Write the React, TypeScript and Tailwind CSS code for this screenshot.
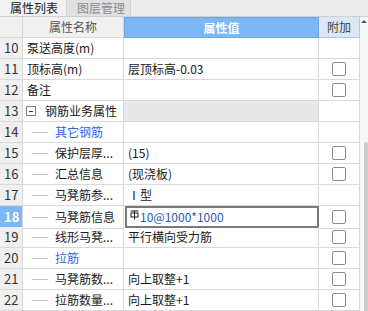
import React from "react"

type Row = {
  n: number
  name: string
  value?: string
  check?: boolean
  group?: boolean
  child?: boolean
  blue?: boolean
  selected?: boolean
}

const rows: Row[] = [
  { n: 10, name: "泵送高度(m)", value: "" },
  { n: 11, name: "顶标高(m)", value: "层顶标高-0.03", check: true },
  { n: 12, name: "备注", value: "", check: true },
  { n: 13, name: "钢筋业务属性", group: true },
  { n: 14, name: "其它钢筋", child: true, blue: true },
  { n: 15, name: "保护层厚...", value: "(15)", child: true, check: true },
  { n: 16, name: "汇总信息", value: "(现浇板)", child: true, check: true },
  { n: 17, name: "马凳筋参...", value: "Ⅰ型", child: true },
  { n: 18, name: "马凳筋信息", value: "10@1000*1000", child: true, check: true, selected: true },
  { n: 19, name: "线形马凳...", value: "平行横向受力筋", child: true, check: true },
  { n: 20, name: "拉筋", child: true, blue: true, check: true },
  { n: 21, name: "马凳筋数...", value: "向上取整+1", child: true, check: true },
  { n: 22, name: "拉筋数量...", value: "向上取整+1", child: true, check: true },
]

function Checkbox() {
  return <div className="w-[14px] h-[14px] rounded-[2px] border border-[#8c8c8c] bg-white" />
}

// HRB400 rebar grade symbol
function RebarMark() {
  return (
    <svg width="9" height="10" viewBox="0 0 9 10" className="mr-[1px] -mt-[4px]">
      <line x1="4.5" y1="0.5" x2="4.5" y2="9.5" stroke="#222" strokeWidth="1" />
      <rect x="1" y="3" width="7" height="4" fill="none" stroke="#222" strokeWidth="1" />
      <line x1="0.5" y1="1" x2="8.5" y2="1" stroke="#222" strokeWidth="1" />
    </svg>
  )
}

export default function App() {
  return (
    <div
      className="w-[368px] h-[311px] overflow-hidden bg-white flex flex-col text-[12px] text-[#1a1a1a]"
      style={{ fontFamily: '"Noto Sans CJK SC", "Noto Sans", sans-serif' }}
    >
      {/* tabs */}
      <div className="h-[17px] shrink-0 flex bg-[#ececec] border-b border-[#cfcfcf]">
        <div className="w-[66px] flex items-center pl-[10px] bg-[#f2f2f2] text-[#222] leading-none">属性列表</div>
        <div className="w-[65px] flex items-center pl-[10px] bg-[#e1e1e1] text-[#8c8c8c] border-x border-[#d2d2d2] leading-none">
          图层管理
        </div>
      </div>

      <div className="flex flex-1 min-h-0">
        <div className="w-[360px] flex flex-col">
          {/* header */}
          <div className="grid grid-cols-[23px_101px_195px_41px] h-[21px] shrink-0">
            <div className="bg-[#f0f0f0] border-r border-b border-[#d9d9d9]" />
            <div className="bg-[#f0f0f0] border-r border-b border-[#d9d9d9] flex items-center justify-center text-[#555]">
              属性名称
            </div>
            <div className="bg-[#7db8f6] border border-[#6aa6e8] flex items-center justify-center text-white font-bold">
              属性值
            </div>
            <div className="bg-[#dbe7f3] border-b border-r border-[#a9c9ea] flex items-center justify-center text-[#444]">
              附加
            </div>
          </div>

          {rows.map((r) => (
            <div key={r.n} className="grid grid-cols-[23px_101px_195px_41px] h-[21px] shrink-0">
              <div
                className={
                  r.selected
                    ? "bg-[#7db8f6] text-white font-bold border-r border-b border-[#d9d9d9] flex items-center pl-[4px] text-[13px]"
                    : "bg-[#f0f0f0] text-[#333] border-r border-b border-[#d9d9d9] flex items-center pl-[4px] text-[13px]"
                }
              >
                {r.n}
              </div>
              <div className="border-r border-b border-[#d9d9d9] flex items-center whitespace-nowrap overflow-hidden">
                {r.group ? (
                  <>
                    <div className="ml-[3px] w-[10px] h-[10px] border border-[#808080] flex items-center justify-center">
                      <div className="w-[4px] h-px bg-[#333]" />
                    </div>
                    <span className="ml-[9px]">{r.name}</span>
                  </>
                ) : r.child ? (
                  <>
                    <div className="ml-[9px] w-[16px] h-px bg-[#c4c4c4]" />
                    <span className={r.blue ? "ml-[7px] text-[#2f66e0]" : "ml-[7px]"}>{r.name}</span>
                  </>
                ) : (
                  <span className="ml-[4px]">{r.name}</span>
                )}
              </div>
              {r.selected ? (
                <div className="border-2 border-[#7a7a7a] flex items-center pl-[3px] text-[#2a5aa8] ml-px mb-px">
                  <RebarMark />
                  {r.value}
                </div>
              ) : (
                <div
                  className={
                    r.group
                      ? "bg-[#e8e8e8] border-r border-b border-[#d9d9d9]"
                      : "border-r border-b border-[#d9d9d9] flex items-center pl-[4px] whitespace-nowrap"
                  }
                >
                  {r.value}
                </div>
              )}
              <div className="border-r border-b border-[#d9d9d9] flex items-center justify-center">
                {r.check && <Checkbox />}
              </div>
            </div>
          ))}
        </div>

        {/* scrollbar */}
        <div className="w-[8px] bg-[#f7f7f7] flex flex-col items-end">
          <div className="mt-[3px] mr-[1px] w-0 h-0 border-x-[3px] border-x-transparent border-b-[3px] border-b-[#555]" />
          <div className="mt-[119px] w-[4px] flex-1 bg-[#cdcdcd] rounded-t-[2px]" />
        </div>
      </div>
    </div>
  )
}
